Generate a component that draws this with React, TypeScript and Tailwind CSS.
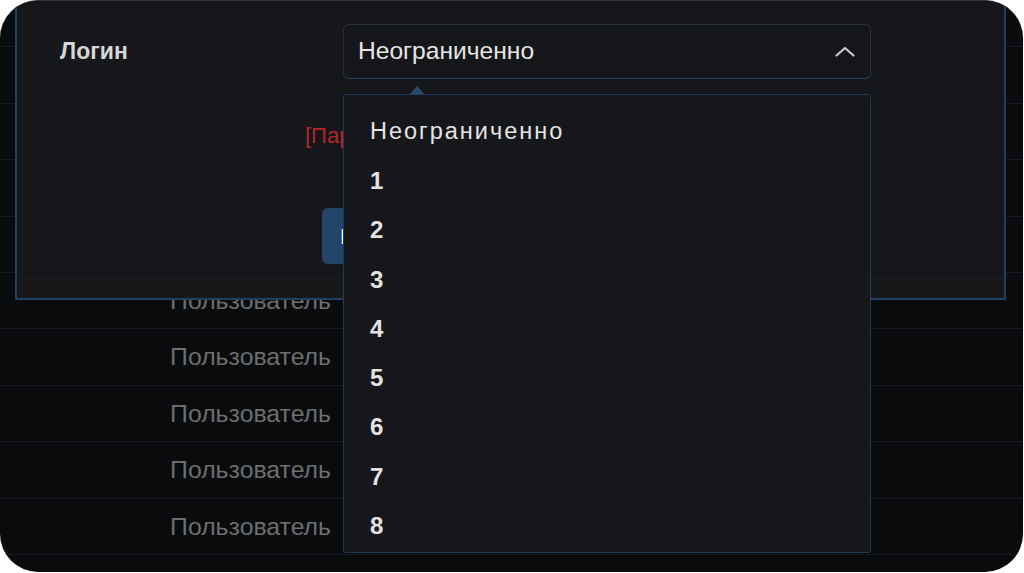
const rows = Array.from({ length: 10 });
const options = ['1', '2', '3', '4', '5', '6', '7', '8'];

const font = { fontFamily: '"Liberation Sans", Arial, sans-serif' };

export default function App() {
  return (
    <div className="h-[573px] w-full bg-white" style={font}>
      <div className="relative h-[572px] w-[1023px] overflow-hidden rounded-[38px] border-t border-[#333539] bg-[#0a0b0d]">
        {/* background table */}
        <div className="-mt-[10px] flex flex-col">
          {rows.map((_, i) => (
            <div key={i} className="flex h-[56.4px] shrink-0 items-center border-b border-[#151a21]">
              <div className="w-[331px] text-right text-[24.8px] text-[#6d6e70]">Пользователь</div>
            </div>
          ))}
        </div>

        {/* modal */}
        <div className="absolute left-[15px] top-[-20px] flex w-[991px] flex-col border-2 border-[#213f60] bg-[#16171b]">
          <div className="flex items-center pt-[41px]">
            <div className="w-[326px] pl-[43px] text-[23px] font-bold text-[#d6d6d6]">Логин</div>
            <div className="relative h-[55px] w-[528px]">
              <div className="flex h-full items-center justify-between rounded-[6px] border border-[#2a3038] border-b-[#1e4266] bg-[#15161a] pl-[14px] pr-[15px]">
                <span className="text-[24.6px] text-[#e6e6e6]">Неограниченно</span>
                <svg width="20" height="11" viewBox="0 0 20 11" fill="none">
                  <polyline points="1.5,9.5 10,2 18.5,9.5" stroke="#c9c9c9" strokeWidth="2.2" strokeLinecap="round" strokeLinejoin="round" />
                </svg>
              </div>

              {/* dropdown */}
              <svg className="absolute left-[66px] top-[62px]" width="16" height="9" viewBox="0 0 16 9">
                <polygon points="0,9 8,0 16,9" fill="#2b4a6b" />
              </svg>
              <div className="absolute left-0 top-[70px] z-10 flex h-[459px] w-[528px] flex-col rounded-[3px] border border-[#1f3a58] bg-[#16171b] pt-[12px]">
                <div className="flex h-[49.3px] shrink-0 items-center pl-[26px]">
                  <span className="border-y border-dotted border-[#191d30] py-[10px] text-[23.5px] tracking-[2px] text-[#e4e4e4]">Неограниченно</span>
                </div>
                {options.map((o) => (
                  <div key={o} className="flex h-[49.3px] shrink-0 items-center pl-[26px] text-[24px] font-bold text-[#e2e2e2]">
                    {o}
                  </div>
                ))}
              </div>
            </div>
          </div>

          <div className="mt-[42px] h-[30px] pl-[288px] text-[22px] leading-[30px] text-[#b3262c]">[Пароль не может быть пустым]</div>

          <div className="mt-[57px] pl-[305px]">
            <button className="h-[56px] rounded-[6px] bg-[#234569] px-[18px] text-[22px] text-white">Применить</button>
          </div>

          <div className="mt-[14px] h-[20px] border-t border-[#1f1c1e] bg-[#18171a]" />
        </div>
      </div>
    </div>
  );
}
